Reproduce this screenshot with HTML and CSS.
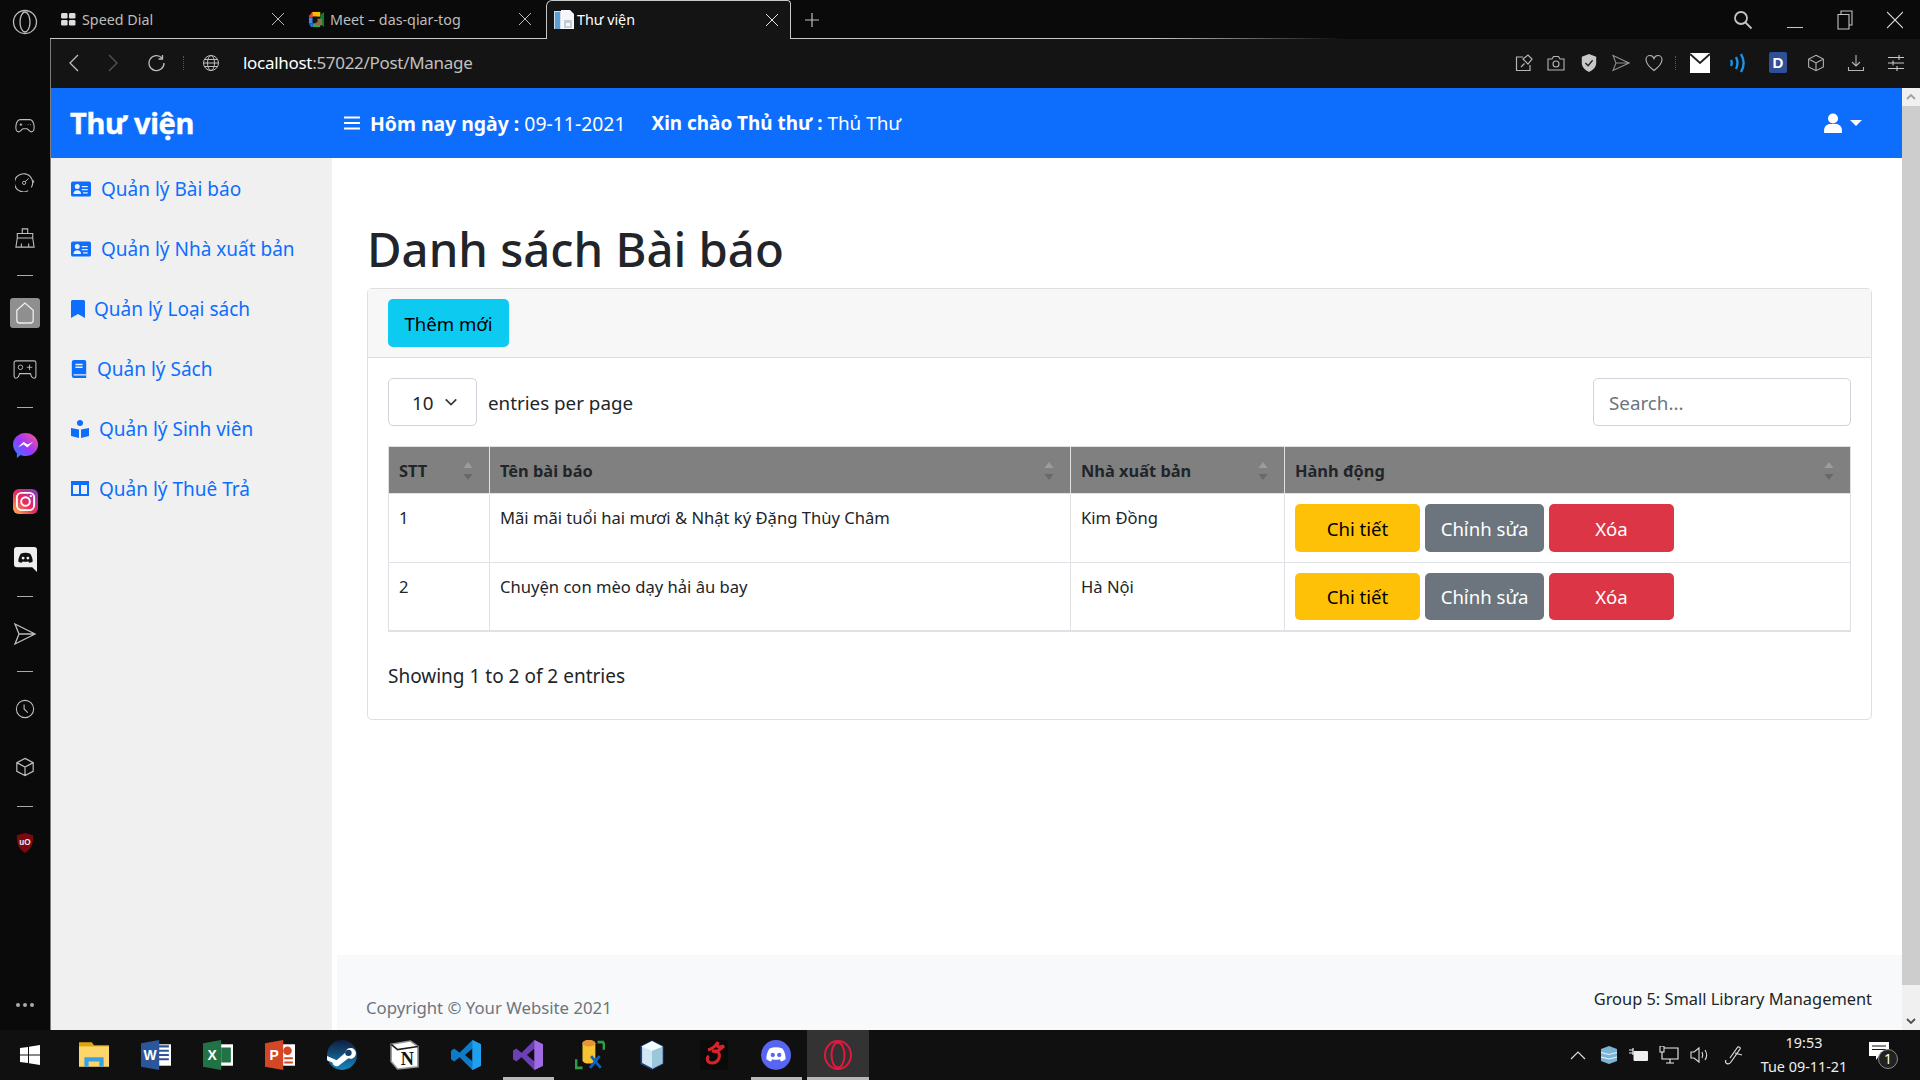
FILE: index.html
```html
<!DOCTYPE html>
<html lang="vi">
<head>
<meta charset="utf-8">
<title>Thư viện</title>
<link rel="stylesheet" href="styles.css">
</head>
<body>
<svg class="defs" width="0" height="0" aria-hidden="true">
  <symbol id="i-x" viewBox="0 0 14 14"><path d="M1 1l12 12M13 1L1 13" fill="none" stroke="currentColor" stroke-width="1"/></symbol>
  <symbol id="i-box" viewBox="0 0 22 22"><path d="M11 1.500l9 4.700v9.600l-9 4.700-9-4.700V6.200zM2 6.200l9 4.800 9-4.800M11 11v9.500" fill="none" stroke="currentColor" stroke-width="1.300"/></symbol>
  <symbol id="i-send" viewBox="0 0 24 24"><path d="M2 2l20 10L2 22l4-10zM6 12h16" fill="none" stroke="currentColor" stroke-width="1.300"/></symbol>
  <symbol id="i-card" viewBox="0 0 16 16"><path fill="currentColor" d="M0 3.500A1.500 1.500 0 0 1 1.500 2h13A1.500 1.500 0 0 1 16 3.500v9a1.500 1.500 0 0 1-1.500 1.500h-13A1.500 1.500 0 0 1 0 12.500zM5 8a2 2 0 1 0 0-4 2 2 0 0 0 0 4zm4-2.500a.5.5 0 0 0 0 1h4a.5.5 0 0 0 0-1zM9 8a.5.5 0 0 0 0 1h4a.5.5 0 0 0 0-1zm1 2.500a.5.5 0 0 0 0 1h3a.5.5 0 0 0 0-1zM8 12c0-2-1-3-3-3s-3 1-3 3z"/></symbol>
  <symbol id="i-sort" viewBox="0 0 10 20"><path fill="#9c9c9c" d="M5 1l4.500 6H.5z"/><path fill="#686868" d="M5 19l4.500-6H.5z"/></symbol>
</svg>

<div class="shell">
  <header class="tabs">
    <div class="brand-cell"><svg class="opera-o" viewBox="0 0 26 26"><circle cx="13" cy="13" r="11.500" fill="none" stroke="#bdbdbd" stroke-width="1.300"/><ellipse cx="13" cy="13" rx="5" ry="10" fill="none" stroke="#bdbdbd" stroke-width="1.300"/></svg></div>
    <div class="tab">
      <svg class="tab-ico ico-dial" viewBox="0 0 16 14"><rect x="0" y="0" width="7" height="6" rx="1.500" fill="#ddd"/><rect x="8.500" y="0" width="7" height="6" rx="1.500" fill="#ddd"/><rect x="0" y="7.500" width="7" height="6" rx="1.500" fill="#ddd"/><rect x="8.500" y="7.500" width="7" height="6" rx="1.500" fill="#ddd"/></svg>
      <span class="tab-title">Speed Dial</span>
      <svg class="tab-x"><use href="#i-x"/></svg>
    </div>
    <div class="tab">
      <svg class="tab-ico ico-meet" viewBox="0 0 18 18"><path fill="#fbbc04" d="M4 1h9v5H4z"/><path fill="#ea4335" d="M1 5l4-4v6H1z"/><path fill="#4285f4" d="M1 7h4v6H1z"/><path fill="#1a73e8" d="M1 13h4v4H3z"/><path fill="#34a853" d="M5 13h8v4H5z"/><path fill="#00832d" d="M13 4l4-3v16l-4-3z"/><path fill="#8a6d4a" d="M8 8h7v7H8z"/><path fill="#111" d="M5 6h5v6H5z"/></svg>
      <span class="tab-title">Meet – das-qiar-tog</span>
      <svg class="tab-x"><use href="#i-x"/></svg>
    </div>
    <div class="tab tab-active">
      <svg class="tab-ico ico-doc" viewBox="0 0 20 20"><path fill="#d5dde6" d="M0 1h12v18H0z"/><path fill="#f4f6f9" d="M7 0h9l4 4v15H7z"/><path fill="#5aa0d8" d="M1 2h5v17H1z"/><path fill="#c4ccd6" d="M10 10h8v8h-8z"/><path fill="#f4f6f9" d="M12 13h4v3h-4z"/></svg>
      <span class="tab-title">Thư viện</span>
      <svg class="tab-x"><use href="#i-x"/></svg>
    </div>
    <svg class="tab-plus" viewBox="0 0 14 14"><path d="M7 0v14M0 7h14" stroke="#bdbdbd" stroke-width="1.200"/></svg>
    <div class="win-ctl">
      <svg class="win-search" viewBox="0 0 20 20"><circle cx="8" cy="8" r="6" fill="none" stroke="#c4c4c4" stroke-width="1.800"/><path d="M12.500 12.500l6 6" stroke="#c4c4c4" stroke-width="1.800"/></svg>
      <svg class="win-min" viewBox="0 0 16 16"><path d="M0 15.500h16" stroke="#c4c4c4"/></svg>
      <svg class="win-max" viewBox="0 0 16 20"><path d="M4 4V1h11v14h-3M1 4.500h11V19H1z" fill="none" stroke="#c4c4c4" stroke-width="1.100"/></svg>
      <svg class="win-close" viewBox="0 0 16 20"><path d="M0 2l16 16M16 2L0 18" stroke="#d8d8d8" stroke-width="1.100"/></svg>
    </div>
  </header>

  <aside class="rail">
    <span class="slot"><svg class="rail-ico" viewBox="0 0 22 22"><path d="M6 4h10c3 0 4.500 3 5 7 .4 3.500-.5 6.500-3 6.500-2 0-3-3-5-3.500H9c-2 .5-3 3.500-5 3.500-2.500 0-3.400-3-3-6.500C1.500 7 3 4 6 4z" fill="none" stroke="currentColor" stroke-width="1.200"/><path d="M5 9.500h3M6.500 8v3M14 9.500h.8M16.500 9.500h.8" stroke="currentColor"/></svg></span>
    <span class="slot"><svg class="rail-ico" viewBox="0 0 22 22"><path d="M18 17a10 10 0 1 0-3.500 3.500" fill="none" stroke="currentColor" stroke-width="1.200"/><circle cx="10" cy="12" r="1.800" fill="none" stroke="currentColor"/><path d="M11 11l4-4M20.500 9v3" stroke="currentColor"/></svg></span>
    <span class="slot"><svg class="rail-ico" viewBox="0 0 22 22"><path d="M8 6V1h6v5M2.500 6h17v5h-17zM2.500 11L1 21h20l-1.500-10M7 21v-4M15 21v-4" fill="none" stroke="currentColor" stroke-width="1.200"/></svg></span>
    <i class="rail-sep"></i>
    <span class="slot"><span class="rail-home"><svg viewBox="0 0 22 24"><path d="M11 1L2 9v11a3 3 0 0 0 3 3h12a3 3 0 0 0 3-3V9z" fill="none" stroke="#eee" stroke-width="1.400"/></svg></span></span>
    <span class="slot slot-game"><svg class="rail-ico rail-game" viewBox="0 0 26 22"><path d="M3 1h20a2 2 0 0 1 2 2v14c0 2-1 3-2 3s-2 0-3-2l-1-3H7l-1 3c-1 2-2 2-3 2s-2-1-2-3V3a2 2 0 0 1 2-2z" fill="none" stroke="currentColor" stroke-width="1.200"/><circle cx="8" cy="8" r="2.500" fill="none" stroke="currentColor"/><path d="M18 5v6M15 8h6" stroke="currentColor"/></svg></span>
    <i class="rail-sep"></i>
    <span class="slot"><svg class="rail-ico rail-logo" viewBox="0 0 26 26"><defs><linearGradient id="g-msg" x1="0" y1="1" x2="1" y2="0"><stop offset="0" stop-color="#1f8bff"/><stop offset=".5" stop-color="#a033ff"/><stop offset="1" stop-color="#ff5c87"/></linearGradient></defs><path fill="url(#g-msg)" d="M13 0C6 0 0 5 0 12c0 4 2 7 4 9v5l4-3c2 1 3 1 5 1 7 0 13-5 13-12S20 0 13 0z"/><path d="M5 15l6-6 4 3 6-3-6 6-4-3z" fill="#fff"/></svg></span>
    <span class="slot"><svg class="rail-ico rail-logo" viewBox="0 0 26 26"><defs><linearGradient id="g-ig" x1="0" y1="1" x2="1" y2="0"><stop offset="0" stop-color="#fdc04d"/><stop offset=".45" stop-color="#ee2a57"/><stop offset="1" stop-color="#7a3ccf"/></linearGradient></defs><rect width="26" height="26" rx="6" fill="url(#g-ig)"/><rect x="4" y="4" width="18" height="18" rx="5" fill="none" stroke="#fff" stroke-width="2"/><circle cx="13" cy="13" r="4.500" fill="none" stroke="#fff" stroke-width="2"/><circle cx="18.500" cy="7.500" r="1.200" fill="#fff"/></svg></span>
    <span class="slot slot-dc"><svg class="rail-ico rail-dc" viewBox="0 0 24 26"><path fill="#eee" d="M3 0h18a3 3 0 0 1 3 3v23l-5-5H3a3 3 0 0 1-3-3V3a3 3 0 0 1 3-3z"/><path fill="#111" d="M7 7c3-1.500 7-1.500 10 0 2 3 2.500 6 2.500 8-1.500 1-3 1.500-3.500 1.500l-1-1.500c-2 .6-4 .6-6 0l-1 1.500C7.500 16.500 6 16 4.500 15c0-2 .5-5 2.500-8z"/><circle cx="9.500" cy="11.500" r="1.500" fill="#eee"/><circle cx="14.500" cy="11.500" r="1.500" fill="#eee"/></svg></span>
    <i class="rail-sep"></i>
    <span class="slot"><svg class="rail-ico rail-send"><use href="#i-send"/></svg></span>
    <i class="rail-sep"></i>
    <span class="slot"><svg class="rail-ico" viewBox="0 0 22 22"><circle cx="11" cy="11" r="9.500" fill="none" stroke="currentColor" stroke-width="1.200"/><path d="M10 6v5l4 4" fill="none" stroke="currentColor" stroke-width="1.200"/></svg></span>
    <span class="slot slot-box"><svg class="rail-ico"><use href="#i-box"/></svg></span>
    <i class="rail-sep rail-sep-last"></i>
    <span class="slot slot-ub"><svg class="rail-ico" viewBox="0 0 20 22"><path fill="#7a0a0f" d="M10 0l9 2.500c0 10-2 15-9 19.500C3 17.500 1 12.500 1 2.500z"/><text x="10" y="13.500" class="ub-text">uO</text></svg></span>
    <span class="rail-more"><i></i><i></i><i></i></span>
  </aside>

  <div class="window">
    <div class="addr">
      <svg class="nav-ico" viewBox="0 0 10 18"><path d="M9 1L1 9l8 8" fill="none" stroke="#bdbdbd" stroke-width="1.300"/></svg>
      <svg class="nav-ico nav-fwd" viewBox="0 0 10 18"><path d="M1 1l8 8-8 8" fill="none" stroke="#555" stroke-width="1.300"/></svg>
      <svg class="nav-reload" viewBox="0 0 18 18"><path d="M15 4a7.500 7.500 0 1 0 2 5" fill="none" stroke="#bdbdbd" stroke-width="1.300"/><path d="M15.500 1v4h-4" fill="none" stroke="#bdbdbd" stroke-width="1.300"/></svg>
      <i class="dots-v"></i>
      <svg class="nav-globe" viewBox="0 0 18 18"><g fill="none" stroke="#bdbdbd"><circle cx="9" cy="9" r="7.500"/><ellipse cx="9" cy="9" rx="3.500" ry="7.500"/><path d="M1.500 9h15M2.500 5.500h13M2.500 12.500h13"/></g></svg>
      <span class="url"><b>localhost</b>:57022/Post/Manage</span>
      <div class="addr-tools">
        <svg viewBox="0 0 18 18"><g fill="none" stroke="#b5b5b5" stroke-width="1.200"><path d="M8 3H1.500v13.500H15V11"/><path d="M6 13l3.500-3.500M8 5l5-4 4 4-4 5z"/></g></svg>
        <svg viewBox="0 0 18 18"><g fill="none" stroke="#b5b5b5" stroke-width="1.100"><path d="M1 5h4l1.500-2.500h5L13 5h4v11H1z"/><circle cx="9" cy="10" r="3"/></g></svg>
        <svg viewBox="0 0 18 20"><path fill="#c8c8c8" d="M9 0l8 3v7c0 5-4 8-8 10-4-2-8-5-8-10V3z"/><path d="M5 10l3 3 5-6" fill="none" stroke="#222" stroke-width="1.500"/></svg>
        <svg viewBox="0 0 18 18"><path d="M1 1.500L17 9 1 16.500l3-7.500zM4 9h13" fill="none" stroke="#8f8f8f" stroke-width="1.100"/></svg>
        <svg viewBox="0 0 18 18"><path d="M9 16.500C3 12 1 9 1 5.500 1 3 3 1.500 5 1.500c2 0 3.500 1.500 4 3 .5-1.500 2-3 4-3s4 1.500 4 4c0 3.500-2 6.500-8 11z" fill="none" stroke="#b5b5b5" stroke-width="1.100"/></svg>
        <i class="dots-v dots-tools"></i>
        <svg class="tool-mail" viewBox="0 0 20 20"><path fill="#fff" d="M0 0h20v20H0z"/><path d="M0 1l10 9 10-9" fill="none" stroke="#222" stroke-width="2"/></svg>
        <svg class="tool-cast" viewBox="0 0 18 20"><g fill="none" stroke="#1e90e8" stroke-width="2.400"><path d="M2 7c1 2 1 4 0 6M7 4c2 4 2 8 0 12M12 1c3.500 6 3.500 12 0 18"/></g></svg>
        <span class="tool-d">D</span>
        <svg class="tool-box"><use href="#i-box"/></svg>
        <svg class="tool-dl" viewBox="0 0 18 18"><path d="M9 1v11M5 8l4 4 4-4M1.500 13v3.500h15V13" fill="none" stroke="#b5b5b5" stroke-width="1.100"/></svg>
        <svg class="tool-sl" viewBox="0 0 18 18"><path d="M1 3.500h16M1 9h16M1 14.500h16M12 1v5M6 6.500v5M10 12v5" fill="none" stroke="#c8c8c8" stroke-width="1.100"/></svg>
      </div>
    </div>

    <div class="page-row">
      <div class="page">
        <nav class="navbar">
          <a class="nav-brand">Thư viện</a>
          <svg class="nav-burger" viewBox="0 0 16 14"><path d="M0 1.500h16M0 7h16M0 12.500h16" stroke="#fff" stroke-width="2"/></svg>
          <span class="nav-info"><strong>Hôm nay ngày :</strong> 09-11-2021</span>
          <span class="nav-info nav-hello"><strong>Xin chào Thủ thư :</strong> Thủ Thư</span>
          <span class="nav-user">
            <svg viewBox="0 0 16 18"><circle cx="8" cy="5" r="4.500" fill="#fff"/><path fill="#fff" d="M0 18v-2.500C0 12 3 10 5 10h6c2 0 5 2 5 5.500V18z"/></svg>
            <i class="caret"></i>
          </span>
        </nav>

        <div class="body-row">
          <ul class="side">
            <li><a><svg class="si si-card"><use href="#i-card"/></svg>Quản lý Bài báo</a></li>
            <li><a><svg class="si si-card"><use href="#i-card"/></svg>Quản lý Nhà xuất bản</a></li>
            <li><a><svg class="si si-mark" viewBox="0 0 14 18"><path fill="currentColor" d="M0 1.500A1.500 1.500 0 0 1 1.500 0h11A1.500 1.500 0 0 1 14 1.500V18l-7-4-7 4z"/></svg>Quản lý Loại sách</a></li>
            <li><a><svg class="si si-book" viewBox="0 0 16 20"><path fill="currentColor" d="M2.500 0H14a2 2 0 0 1 2 2v18H2.500A2.500 2.500 0 0 1 0 17.500v-15A2.500 2.500 0 0 1 2.500 0z"/><path d="M4 5h8M4 8h8M2 16.500h14" stroke="#f0f0f0" stroke-width="1.500"/></svg>Quản lý Sách</a></li>
            <li><a><svg class="si si-read" viewBox="0 0 18 18"><circle cx="9" cy="3" r="3" fill="currentColor"/><path fill="currentColor" d="M0 8l8 1.500V18L0 16zM18 8l-8 1.500V18l8-2z"/></svg>Quản lý Sinh viên</a></li>
            <li><a><svg class="si si-read" viewBox="0 0 18 16"><path fill="none" stroke="currentColor" stroke-width="2" d="M1 2h16v12H1zM9 2v12"/><path fill="currentColor" d="M0 0h18v4H0z"/></svg>Quản lý Thuê Trả</a></li>
          </ul>

          <main class="main">
            <div class="content">
              <h1>Danh sách Bài báo</h1>
              <section class="card">
                <div class="card-head"><a class="btn btn-info">Thêm mới</a></div>
                <div class="card-body">
                  <div class="dt-top">
                    <label class="dt-len">
                      <span class="select"><span class="select-val">10</span><svg viewBox="0 0 16 16"><path d="M2 5l6 6 6-6" fill="none" stroke="#343a40" stroke-width="2"/></svg></span>
                      <span class="len-txt">entries per page</span>
                    </label>
                    <span class="search">Search...</span>
                  </div>
                  <table class="dt">
                    <colgroup><col class="c1"><col class="c2"><col class="c3"><col class="c4"></colgroup>
                    <thead>
                      <tr>
                        <th>STT<svg class="sort"><use href="#i-sort"/></svg></th>
                        <th>Tên bài báo<svg class="sort"><use href="#i-sort"/></svg></th>
                        <th>Nhà xuất bản<svg class="sort"><use href="#i-sort"/></svg></th>
                        <th>Hành động<svg class="sort"><use href="#i-sort"/></svg></th>
                      </tr>
                    </thead>
                    <tbody>
                      <tr>
                        <td>1</td><td>Mãi mãi tuổi hai mươi &amp; Nhật ký Đặng Thùy Châm</td><td>Kim Đồng</td>
                        <td class="acts"><a class="btn btn-warn">Chi tiết</a><a class="btn btn-sec">Chỉnh sửa</a><a class="btn btn-dan">Xóa</a></td>
                      </tr>
                      <tr>
                        <td>2</td><td>Chuyện con mèo dạy hải âu bay</td><td>Hà Nội</td>
                        <td class="acts"><a class="btn btn-warn">Chi tiết</a><a class="btn btn-sec">Chỉnh sửa</a><a class="btn btn-dan">Xóa</a></td>
                      </tr>
                    </tbody>
                  </table>
                  <p class="dt-info">Showing 1 to 2 of 2 entries</p>
                </div>
              </section>
            </div>
            <footer class="foot">
              <span class="foot-l">Copyright © Your Website 2021</span>
              <span class="foot-r">Group 5: Small Library Management</span>
            </footer>
          </main>
        </div>
      </div>

      <div class="scrollbar">
        <span class="sb-btn"><svg viewBox="0 0 10 6"><path d="M1 5l4-4 4 4" fill="none" stroke="#a0a0a0" stroke-width="1.800"/></svg></span>
        <span class="sb-thumb"></span>
        <span class="sb-rest"></span>
        <span class="sb-btn"><svg viewBox="0 0 10 6"><path d="M1 1l4 4 4-4" fill="none" stroke="#505050" stroke-width="1.800"/></svg></span>
      </div>
    </div>
  </div>

  <footer class="taskbar">
    <svg class="tb-start" viewBox="0 0 20 20"><path fill="#fff" d="M0 3l8-1v7.500H0zM9 1.800L20 0v9.500H9zM0 10.500h8V18l-8-1zM9 10.500h11V20L9 18.300z"/></svg>
    <span class="tb-app"><svg viewBox="0 0 28 24"><path fill="#e0a30c" d="M0 0h12l2 3h14v8H0z"/><path fill="#fcd66a" d="M0 4h28v19H0z"/><path fill="#3ba1e6" d="M5 23V14h18v9h-4v-5H9v5z"/></svg></span>
    <span class="tb-app"><svg viewBox="0 0 28 28"><path fill="#fff" d="M14 4h14v20H14z"/><path fill="#2b579a" d="M16 6h10M16 10h10M16 14h10M16 18h10" stroke="#2b579a" stroke-width="2"/><path fill="#2b579a" d="M0 3l17-3v28L0 25z"/><text x="8.500" y="19" class="tb-letter">W</text></svg></span>
    <span class="tb-app"><svg viewBox="0 0 28 28"><path fill="#fff" d="M14 4h14v20H14z"/><path d="M17 7h9v14h-9z" fill="#217346"/><path fill="#217346" d="M0 3l17-3v28L0 25z"/><text x="8.500" y="19" class="tb-letter">X</text></svg></span>
    <span class="tb-app"><svg viewBox="0 0 28 28"><path fill="#fff" d="M14 4h14v20H14z"/><path d="M18 17h8M18 21h8" stroke="#d24726" stroke-width="2"/><circle cx="21" cy="10" r="4" fill="#d24726"/><path fill="#d24726" d="M0 3l17-3v28L0 25z"/><text x="8.500" y="19" class="tb-letter">P</text></svg></span>
    <span class="tb-app"><svg viewBox="0 0 28 28"><defs><linearGradient id="g-st" x1="0" y1="0" x2="0" y2="1"><stop offset="0" stop-color="#111d3f"/><stop offset="1" stop-color="#1487c0"/></linearGradient></defs><circle cx="14" cy="14" r="14" fill="url(#g-st)"/><path fill="#fff" d="M0 15l9 4 8-7a5 5 0 1 1 3 5l-8 6a4 4 0 0 1-7-2l-5-2z"/><circle cx="20" cy="12" r="3" fill="#1a3e6b"/></svg></span>
    <span class="tb-app"><svg viewBox="0 0 28 28"><path fill="#fff" stroke="#999" stroke-width="1.500" d="M2 4l18-3 7 5v19l-19 2-6-7z"/><path d="M2 4l6 5 19-3" fill="none" stroke="#222" stroke-width="1.500"/><text x="17" y="23" class="tb-notion">N</text></svg></span>
    <span class="tb-app"><svg viewBox="0 0 28 28"><path fill="#0e7bc9" d="M20 0l8 4v20l-8 4L8 16l-5 4-3-2V10l3-2 5 4zM20 8l-7 6 7 6z"/><path fill="#1ea0ee" d="M20 0l8 4v20l-8 4z"/></svg></span>
    <span class="tb-app tb-app-open"><svg viewBox="0 0 28 28"><path fill="#6c3fb5" d="M20 0l8 4v20l-8 4L8 16l-5 4-3-2V10l3-2 5 4zM20 8l-7 6 7 6z"/><path fill="#a06be0" d="M20 0l8 4v20l-8 4z"/></svg></span>
    <span class="tb-app"><svg viewBox="0 0 28 28"><path d="M1 18v8h6M27 2h-6M27 2v7" fill="none" stroke="#2f9e44" stroke-width="2.500"/><path d="M7 3a6 3 0 0 1 12 0v16a6 3 0 0 1-12 0z" fill="#f6c430"/><path d="M7 3a6 3 0 0 1 12 0 6 3 0 0 1-12 0z" fill="#e8943a"/><path d="M14 26l9-11M24 26l-9-11" stroke="#0a62c7" stroke-width="2.500"/></svg></span>
    <span class="tb-app"><svg viewBox="0 0 24 28"><path fill="#cfe7f3" d="M2 6l10-5 10 5v16l-10 5-10-5z" stroke="#1f3f82" stroke-width="1.500"/><path fill="#9cc7da" d="M12 10v17l10-5V6z"/><path fill="#f2fbff" d="M2 6l10 4 10-4-10-5z"/></svg></span>
    <span class="tb-app"><svg viewBox="0 0 28 30"><rect width="28" height="30" rx="2" fill="#0a0a0a"/><path d="M8 10c4-1 7-3 10-8-1 3-1 5 1 5l5-1-6 5h-6l6 1c3 3 1 11-6 11-5 0-6-5-3-7" fill="none" stroke="#d8232a" stroke-width="3"/></svg></span>
    <span class="tb-app tb-app-open"><svg viewBox="0 0 28 28"><circle cx="14" cy="14" r="14" fill="#5865f2"/><path fill="#fff" d="M8 8c4-1.500 8-1.500 12 0 2.500 3.500 3 7 3 10-1.800 1.200-3.300 1.800-4.300 2l-1.200-2c-2.300.7-4.700.7-7 0l-1.200 2c-1-.2-2.500-.8-4.300-2 0-3 .5-6.500 3-10z"/><circle cx="11" cy="14" r="2" fill="#5865f2"/><circle cx="17" cy="14" r="2" fill="#5865f2"/></svg></span>
    <span class="tb-app tb-app-on"><svg viewBox="0 0 28 30"><ellipse cx="14" cy="15" rx="13" ry="14" fill="none" stroke="#e2183f" stroke-width="2"/><ellipse cx="14" cy="15" rx="6.500" ry="12.500" fill="none" stroke="#e2183f" stroke-width="2"/></svg></span>

    <div class="tray">
      <svg class="t-up" viewBox="0 0 16 9"><path d="M1 8l7-7 7 7" fill="none" stroke="#ddd" stroke-width="1.200"/></svg>
      <svg class="t-db" viewBox="0 0 18 18"><path fill="#7cb4d8" d="M1 3l8-3 8 3v12l-8 3-8-3z"/><path d="M1 6.500l8 2 8-2M1 11l8 2 8-2" fill="none" stroke="#e5f2fa" stroke-width="1.200"/></svg>
      <svg class="t-bat" viewBox="0 0 20 14"><path d="M0 2h4M0 5h4M4 0v7" stroke="#eee" stroke-width="1.200"/><path d="M5 3.500h13.500v9H5z" fill="none" stroke="#eee"/><rect x="5" y="4" width="13" height="8" fill="#eee"/></svg>
      <svg class="t-net" viewBox="0 0 20 18"><path d="M3 2h16v11H3zM11 13v4M7 17h8" fill="none" stroke="#eee" stroke-width="1.100"/><rect x="1" y="0" width="4" height="6" fill="#111" stroke="#eee"/></svg>
      <svg class="t-vol" viewBox="0 0 20 18"><path d="M1 6h3l5-4v14l-5-4H1zM12 6c1 2 1 4 0 6M15 4c2 3 2 7 0 10" fill="none" stroke="#ddd" stroke-width="1.100"/></svg>
      <svg class="t-pen" viewBox="0 0 20 20"><path d="M2 15c-2 4 3 5 5 2l9-13c1-2-2-3-3-1L6 13M11 8l7 2" fill="none" stroke="#ddd" stroke-width="1.200"/></svg>
      <div class="clock"><span>19:53</span><span>Tue 09-11-21</span></div>
      <span class="notif"><svg viewBox="0 0 20 18"><path fill="#fff" d="M0 0h20v14H10l-3 4v-4H0z"/><path d="M3 4h14M3 7.500h14" stroke="#111"/></svg><b>1</b></span>
    </div>
  </footer>
</div>
</body>
</html>
```

FILE: styles.css
```css
* { box-sizing: border-box; }
html, body { margin: 0; height: 100%; overflow: hidden; }
body { font-family: "Noto Sans", "Open Sans", sans-serif; background: #0a0a0a; color: #212529; }
.defs { position: absolute; }
a { text-decoration: none; }

.shell { display: grid; grid-template-columns: 51px 1fr; grid-template-rows: 39px 1fr 50px; width: 1920px; height: 1080px; }

/* tab strip */
.tabs { grid-column: 1 / 3; display: flex; align-items: center; color: #ccc; background: linear-gradient(90deg, #c8c8c8 0, #c8c8c8 60%, #0a0a0a 70%) 0 100% / 100% 1px no-repeat #0a0a0a; }
.brand-cell { width: 50px; height: 39px; background: #0a0a0a; display: flex; justify-content: center; align-items: center; }
.opera-o { width: 26px; height: 26px; margin-top: 4px; }
.tab { width: 247px; height: 39px; display: flex; align-items: center; padding: 0 12px 1px 10px; font-size: 14.3px; color: #bdbdbd; flex: none; }
.tab-ico { margin-right: 5px; flex: none; }
.ico-dial { width: 17px; height: 13px; }
.ico-meet { width: 19px; height: 17px; margin-right: 4px; }
.ico-doc { width: 20px; height: 20px; margin-right: 3px; }
.tab-title { flex: 1; white-space: nowrap; }
.tab-x { width: 14px; height: 14px; flex: none; color: #bdbdbd; }
.tab-active { width: 245px; margin-left: 2px; background: #141414; color: #fff; border: 1px solid #c8c8c8; border-bottom: 0; border-radius: 6px 4px 0 0; padding-left: 7px; padding-right: 11px; }
.tab-active .tab-x { color: #e6e6e6; }
.tab-plus { width: 14px; height: 14px; margin-left: 14px; flex: none; }
.win-ctl { margin-left: auto; height: 38px; background: #0a0a0a; display: flex; align-items: center; padding-right: 17px; }
.win-search { width: 20px; height: 20px; margin-right: 34px; }
.win-min { width: 16px; height: 16px; margin-right: 34px; }
.win-max { width: 16px; height: 20px; margin-right: 34px; }
.win-close { width: 16px; height: 20px; }

/* sidebar rail */
.rail { display: flex; flex-direction: column; align-items: center; color: #bdbdbd; background: #0a0a0a; border-right: 1px solid #7d7d7d; padding-top: 59px; width: 51px; position: relative; }
.slot { height: 56px; display: flex; align-items: center; justify-content: center; flex: none; }
.slot-game { margin-top: 1px; }
.slot-dc { margin-top: 2px; }
.slot-box { margin-top: 2px; }
.slot-ub { margin-top: -1px; }
.rail-ico { width: 20px; height: 20px; flex: none; }
.rail-sep { width: 16px; height: 1px; background: #aaa; margin: 9px 0; flex: none; }
.rail-sep-last { margin: 11px 0 9px; }
.rail-home { width: 30px; height: 30px; border-radius: 3px; background: #8f8f8f; display: flex; align-items: center; justify-content: center; }
.rail-home svg { width: 20px; height: 24px; }
.rail-game { width: 24px; height: 20px; }
.rail-logo { width: 25px; height: 25px; }
.rail-dc { width: 23px; height: 25px; }
.rail-send { width: 24px; height: 24px; }
.ub-text { font: 700 9px "Liberation Sans", sans-serif; fill: #eee; text-anchor: middle; }
.rail-more { position: absolute; bottom: 23px; display: flex; gap: 3px; }
.rail-more i { width: 4px; height: 4px; border-radius: 50%; background: #aaa; }

.window { display: flex; flex-direction: column; min-width: 0; min-height: 0; }

/* address bar */
.addr { height: 49px; background: #141414; display: flex; align-items: center; padding: 0 0 2px 18px; flex: none; }
.nav-ico { width: 10px; height: 18px; }
.nav-fwd { margin-left: 29px; }
.nav-reload { width: 18px; height: 18px; margin-left: 29px; }
.dots-v { width: 0; height: 14px; border-left: 1px dotted #555; margin-left: 18px; }
.nav-globe { width: 18px; height: 18px; margin-left: 18px; }
.url { margin-left: 23px; font-size: 17px; letter-spacing: -.3px; color: #c0c0c0; }
.url b { font-weight: 400; color: #fff; }
.addr-tools { margin-left: auto; display: flex; align-items: center; padding-right: 15px; color: #b5b5b5; }
.addr-tools svg { width: 18px; height: 18px; flex: none; margin-left: 14.5px; }
.addr-tools .dots-tools { margin-left: 12px; }
.addr-tools .tool-mail { width: 20px; height: 20px; margin-left: 14px; }
.addr-tools .tool-cast { height: 20px; margin-left: 19.5px; }
.tool-d { width: 18px; height: 21px; margin-left: 22px; background: #2f4f96; color: #fff; border-radius: 2px; font: 700 15px/21px "Liberation Sans", sans-serif; text-align: center; flex: none; }
.addr-tools .tool-box { margin-left: 19.5px; }
.addr-tools .tool-dl { margin-left: 22px; }
.addr-tools .tool-sl { margin-left: 22.5px; }

.page-row { flex: 1; display: flex; min-height: 0; }
.page { flex: 1; display: flex; flex-direction: column; min-width: 0; }

/* navbar */
.navbar { height: 70px; flex: none; background: #0d6efd; color: #fff; display: flex; align-items: center; padding: 0 40px 0 19px; font-size: 19.4px; }
.nav-brand { color: #fff; font-size: 29px; font-weight: 700; width: 274px; letter-spacing: -.3px; -webkit-text-stroke: .4px #fff; padding-bottom: 2px; }
.nav-burger { width: 16px; height: 14px; margin-right: 10px; flex: none; }
.nav-hello { margin-left: 26px; font-size: 18.9px; }
.nav-user { margin-left: auto; display: flex; align-items: center; gap: 8px; }
.nav-user svg { width: 18px; height: 20px; }
.caret { width: 0; height: 0; border: 6px solid transparent; border-top-color: #fff; border-bottom: 0; }

.body-row { flex: 1; display: flex; min-height: 0; }

/* page sidebar */
.side { width: 281px; flex: none; background: #f0f0f0; margin: 0; padding: 1px 0 0 20px; list-style: none; }
.side li { height: 60px; display: flex; align-items: center; }
.side a { color: #0d6efd; font-size: 19px; display: flex; align-items: center; }
.si { flex: none; color: #0d6efd; margin-right: 10px; }
.si-card { width: 20px; height: 20px; }
.si-mark { width: 14px; height: 18px; margin-right: 9px; }
.si-book { width: 16px; height: 18px; }
.si-read { width: 18px; height: 18px; }

/* main */
.main { flex: 1; display: flex; flex-direction: column; min-width: 0; background: #fff; }
.content { flex: 1; padding: 61px 30px 0 35px; }
h1 { margin: 0 0 9px; font-size: 47.3px; font-weight: 500; line-height: 60px; color: #212529; }
.card { border: 1px solid #dfdfdf; border-radius: 5px; }
.card-head { background: #f7f7f7; border-bottom: 1px solid #dfdfdf; padding: 10px 20px; height: 69px; }
.card-body { padding: 20px; }
.btn { display: inline-block; border-radius: 5px; height: 48px; font-size: 18.6px; line-height: 49px; text-align: center; }
.btn-info { background: #0dcaf0; color: #000; width: 121px; }
.dt-top { display: flex; align-items: center; justify-content: space-between; height: 48px; font-size: 18.8px; }
.dt-len { display: flex; align-items: center; gap: 11px; }
.len-txt { padding-top: 2px; }
.select { width: 89px; height: 48px; border: 1px solid #ced4da; border-radius: 5px; display: flex; align-items: center; padding-left: 23px; gap: 10px; }
.select-val { padding-top: 2px; }
.select svg { width: 14px; height: 14px; }
.search { width: 258px; height: 48px; border: 1px solid #ced4da; border-radius: 5px; padding: 0 15px; line-height: 48px; color: #6c757d; }

.dt { width: 1463px; margin-top: 20px; border-collapse: collapse; table-layout: fixed; font-size: 16.6px; border-bottom: 2px solid #dee2e6; }
.c1 { width: 101px; } .c2 { width: 581px; } .c3 { width: 214px; }
.dt th { height: 47px; background: #808080; color: #212529; font-size: 16.4px; font-weight: 700; text-align: left; padding: 0 10px; border: 1px solid #dee2e6; position: relative; }
.dt td { height: 69px; padding: 12px 10px 10px; vertical-align: top; border: 1px solid #dee2e6; }
.dt td.acts { padding: 10px; white-space: nowrap; }
.sort { position: absolute; right: 16px; top: 14px; width: 10px; height: 20px; }
.acts .btn { width: 125px; margin-right: 5px; vertical-align: top; }
.dt tbody tr:last-child td { height: 68px; }
.dt tbody tr:last-child .btn { height: 47px; line-height: 48px; }
.btn-warn { background: #ffc107; color: #000; }
.btn-sec { background: #6c757d; color: #fff; }
.acts .btn-sec { width: 119px; }
.btn-dan { background: #dc3545; color: #fff; }
.dt-info { margin: 29px 0 0; font-size: 19px; line-height: 30px; height: 38px; }

.foot { height: 75px; margin-left: 5px; background: #f8f9fa; flex: none; display: flex; justify-content: space-between; padding: 0 30px 0 29px; }
.foot-l { color: #6c757d; margin-top: 41px; font-size: 16.75px; }
.foot-r { color: #212529; margin-top: 32px; font-size: 16.4px; }

.scrollbar { width: 18px; flex: none; background: #f0f0f0; display: flex; flex-direction: column; }
.sb-btn { height: 18px; display: flex; align-items: center; justify-content: center; flex: none; }
.sb-btn svg { width: 10px; height: 6px; }
.sb-thumb { height: 879px; background: #cdcdcd; flex: none; }
.sb-rest { flex: 1; }

/* taskbar */
.taskbar { grid-column: 1 / 3; background: #101010; display: flex; align-items: center; color: #fff; }
.tb-start { width: 20px; height: 20px; margin: 0 23px 0 20px; flex: none; }
.tb-app { width: 62px; height: 50px; display: flex; align-items: center; justify-content: center; flex: none; }
.tb-app svg { width: 30px; height: 30px; }
.tb-app-open { background: linear-gradient(#b8b8b8, #b8b8b8) 50% 100% / 51px 3px no-repeat; }
.tb-app-on { background: linear-gradient(#b8b8b8, #b8b8b8) 0 100% / 100% 3px no-repeat #333; }
.tb-letter { font: 700 13px "Liberation Sans", sans-serif; fill: #fff; text-anchor: middle; }
.tb-notion { font: 700 17px "Liberation Serif", serif; fill: #111; text-anchor: middle; }
.tray { margin-left: auto; display: flex; align-items: center; }
.tray svg { flex: none; }
.t-up { width: 16px; height: 9px; margin-right: 14px; }
.t-db { width: 18px; height: 18px; margin-right: 11px; }
.t-bat { width: 20px; height: 14px; margin-right: 10px; }
.t-net { width: 20px; height: 18px; margin-right: 11px; }
.t-vol { width: 20px; height: 18px; margin-right: 14px; }
.t-pen { width: 20px; height: 20px; margin-right: 16px; }
.clock { display: flex; flex-direction: column; align-items: center; font-size: 14.4px; line-height: 24px; width: 88px; color: #eee; margin-right: 21px; white-space: nowrap; }
.notif { position: relative; width: 32px; height: 30px; margin-right: 19px; }
.notif svg { width: 20px; height: 18px; margin-top: 2px; display: block; }
.notif b { position: absolute; left: 9px; top: 9px; width: 20px; height: 20px; border-radius: 50%; background: #222; border: 1px solid #888; font-size: 14px; font-weight: 400; line-height: 18px; text-align: center; }
```
